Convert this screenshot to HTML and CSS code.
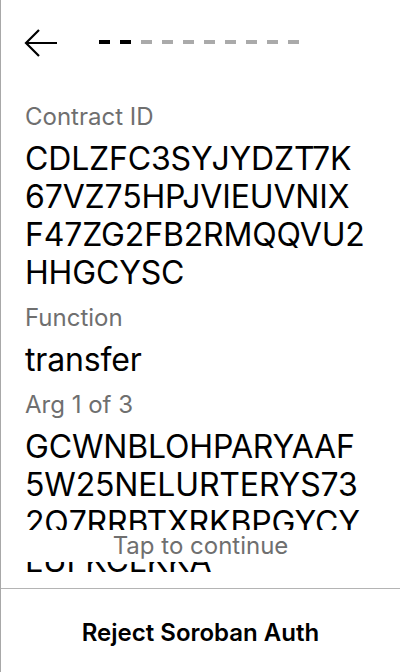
FILE: index.html
```html
<!DOCTYPE html>
<html lang="en">
<head>
<meta charset="utf-8">
<title>Review Soroban Auth</title>
<link rel="stylesheet" href="styles.css">
</head>
<body>
<div class="screen">
  <header class="topbar">
    <svg class="back" width="34" height="30" viewBox="0 0 34 30" aria-label="Back">
      <path d="M2 14 H33 M15 1 L2 14 L15 27" fill="none" stroke="#000" stroke-width="2.2" stroke-linecap="butt" stroke-linejoin="miter"/>
    </svg>
    <div class="progress">
      <span class="dash on"></span><span class="dash on"></span><span class="dash"></span><span class="dash"></span><span class="dash"></span><span class="dash"></span><span class="dash"></span><span class="dash"></span><span class="dash"></span><span class="dash"></span>
    </div>
  </header>
  <main class="content">
    <section class="pair">
      <div class="tag">Contract ID</div>
      <div class="value"><span class="ln">CDLZFC3SYJYDZT7K</span><span class="ln">67VZ75HPJVIEUVNIX</span><span class="ln">F47ZG2FB2RMQQVU2</span><span class="ln">HHGCYSC</span></div>
    </section>
    <section class="pair">
      <div class="tag">Function</div>
      <div class="value"><span class="ln">transfer</span></div>
    </section>
    <section class="pair">
      <div class="tag">Arg 1 of 3</div>
      <div class="value"><span class="ln">GCWNBLOHPARYAAF</span><span class="ln">5W25NELURTERYS73</span><span class="ln">2Q7RRBTXRKBPGYCY</span><span class="ln">LUFKCLKKA</span></div>
    </section>
    <div class="tap">Tap to continue</div>
  </main>
  <footer class="footer">
    <button class="reject">Reject Soroban Auth</button>
  </footer>
</div>
</body>
</html>
```
FILE: styles.css
```css
html, body {
  margin: 0;
  padding: 0;
  background: #fff;
}
body {
  font-family: Inter, "Noto Sans", sans-serif;
  color: #000;
}
.screen {
  width: 400px;
  height: 672px;
  box-sizing: border-box;
  border-left: 1px solid #a8a8a8;
  display: flex;
  flex-direction: column;
  overflow: hidden;
}
.topbar {
  height: 86px;
  flex: none;
  display: flex;
  align-items: flex-start;
  padding: 29px 0 0 23px;
  box-sizing: border-box;
}
.back {
  display: block;
}
.progress {
  display: flex;
  gap: 10px;
  margin: 11px 0 0 41px;
}
.dash {
  width: 11px;
  height: 4px;
  background: #aaaaaa;
}
.dash.on {
  background: #000;
}
.content {
  position: relative;
  height: 492px;
  flex: none;
  overflow: hidden;
  padding: 15px 24px 0 24px;
  box-sizing: border-box;
}
.pair {
  margin-bottom: 10px;
}
.tag {
  font-size: 24px;
  line-height: 32px;
  color: #6f6f6f;
}
.value {
  font-size: 32px;
  line-height: 38px;
  margin-top: 7px;
  letter-spacing: -0.005em;
}
.ln {
  display: block;
  white-space: nowrap;
}
.tap {
  position: absolute;
  left: 0;
  right: 0;
  top: 444px;
  height: 32px;
  background: #fff;
  text-align: center;
  font-size: 24px;
  line-height: 32px;
  color: #6f6f6f;
}
.footer {
  flex: 1;
  border-top: 1px solid #b4b4b4;
  margin-top: 10px;
  padding-top: 3px;
  display: flex;
  align-items: center;
  justify-content: center;
}
.reject {
  border: 0;
  background: none;
  padding: 0;
  font-family: Inter, "Noto Sans", sans-serif;
  font-weight: 600;
  font-size: 24px;
  line-height: 29px;
  color: #000;
}
```
